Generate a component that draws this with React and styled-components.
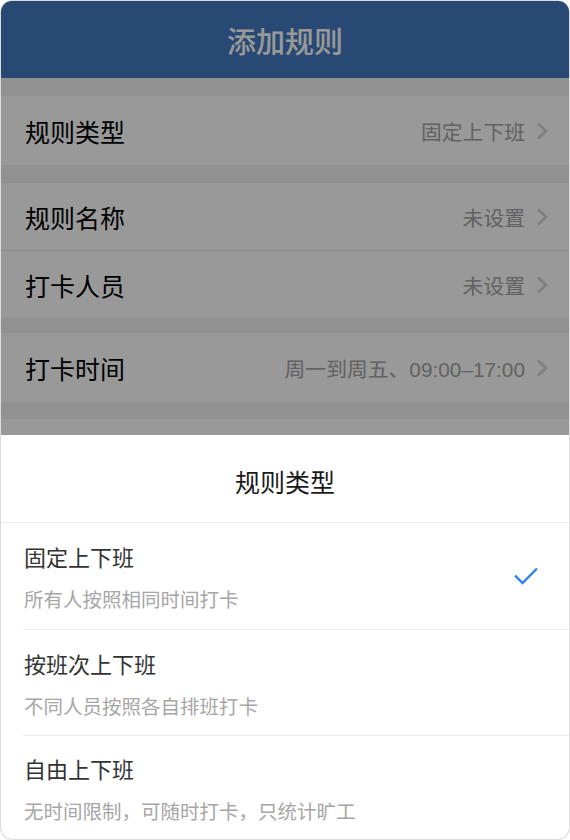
import React from 'react';
import styled, { createGlobalStyle } from 'styled-components';

const GlobalStyle = createGlobalStyle`
    html, body {
        margin: 0;
        padding: 0;
        background: #ffffff;
    }
    * {
        box-sizing: border-box;
    }
`;

const Phone = styled.div`
    position: relative;
    width: 570px;
    height: 840px;
    overflow: hidden;
    border: 1px solid #dcdcdc;
    border-radius: 12px;
    background-color: #f2f2f2;
    font-family: 'Noto Sans CJK SC', 'Noto Sans', sans-serif;
`;

const Header = styled.header`
    height: 77px;
    display: flex;
    align-items: center;
    justify-content: center;
    background-color: #437bc0;
    color: #fff;
    font-size: 29px;
    font-weight: 500;
`;

const Group = styled.div`
    margin-top: ${(p) => p.$gap}px;
    background-color: #fff;
`;

const Row = styled.div`
    height: ${(p) => p.$height}px;
    display: flex;
    align-items: center;
    padding: 0 20px 0 24px;
    border-top: ${(p) => (p.$divider ? '1px solid #e6e6e6' : 'none')};
`;

const Label = styled.span`
    flex: 1;
    font-size: 25px;
    color: #000;
`;

const Value = styled.span`
    font-family: 'Liberation Sans', 'Noto Sans CJK SC', sans-serif;
    font-size: 20.8px;
    color: #a3a3a3;
`;

const Chevron = styled.svg`
    width: 14px;
    height: 20px;
    margin-left: 10px;
    flex-shrink: 0;
`;

const Mask = styled.div`
    position: absolute;
    inset: 0;
    background-color: rgba(0, 0, 0, 0.4);
`;

const Sheet = styled.div`
    position: absolute;
    left: 0;
    right: 0;
    bottom: 0;
    height: 404px;
    background-color: #fff;
    display: flex;
    flex-direction: column;
`;

const SheetTitle = styled.div`
    height: 88px;
    display: flex;
    align-items: center;
    justify-content: center;
    padding-top: 4px;
    font-size: 25px;
    color: #1a1a1a;
    border-bottom: 1px solid #ebebeb;
`;

const Options = styled.div`
    padding-left: 22px;
`;

const Option = styled.div`
    height: ${(p) => p.$height}px;
    display: flex;
    align-items: center;
    padding-right: 30px;
    border-top: ${(p) => (p.$divider ? '1px solid #ebebeb' : 'none')};
`;

const OptionText = styled.div`
    flex: 1;
    display: flex;
    flex-direction: column;
    gap: 17px;
    padding-left: 1px;
    padding-top: 2px;
`;

const OptionTitle = styled.div`
    font-size: 22px;
    line-height: 26px;
    color: #333;
`;

const OptionDesc = styled.div`
    font-size: 19.5px;
    line-height: 25px;
    color: #a6a6a6;
`;

const Check = styled.svg`
    width: 26px;
    height: 20px;
`;

function Arrow() {
    return (
        <Chevron viewBox="0 0 14 20">
            <path
                d="M3 2.5 L11 10 L3 17.5"
                fill="none"
                stroke="#d4d4d4"
                strokeWidth="2.6"
            />
        </Chevron>
    );
}

const groups = [
    { gap: 18, rows: [{ label: '规则类型', value: '固定上下班', h: 69 }] },
    {
        gap: 18,
        rows: [
            { label: '规则名称', value: '未设置', h: 67 },
            { label: '打卡人员', value: '未设置', h: 68 },
        ],
    },
    { gap: 15, rows: [{ label: '打卡时间', value: '周一到周五、09:00–17:00', h: 69 }] },
    { gap: 17, rows: [{ label: '', value: '', h: 69 }] },
];

const options = [
    { title: '固定上下班', desc: '所有人按照相同时间打卡', checked: true, h: 106 },
    { title: '按班次上下班', desc: '不同人员按照各自排班打卡', h: 106 },
    { title: '自由上下班', desc: '无时间限制，可随时打卡，只统计旷工', h: 104 },
];

export default function App() {
    return (
        <>
            <GlobalStyle />
            <Phone>
                <Header>添加规则</Header>
                {groups.map((group, gi) => (
                    <Group key={gi} $gap={group.gap}>
                        {group.rows.map((row, ri) => (
                            <Row key={ri} $height={row.h} $divider={ri > 0}>
                                <Label>{row.label}</Label>
                                {row.value && <Value>{row.value}</Value>}
                                {row.value && <Arrow />}
                            </Row>
                        ))}
                    </Group>
                ))}
                <Mask />
                <Sheet>
                    <SheetTitle>规则类型</SheetTitle>
                    <Options>
                        {options.map((opt, i) => (
                            <Option key={opt.title} $height={opt.h} $divider={i > 0}>
                                <OptionText>
                                    <OptionTitle>{opt.title}</OptionTitle>
                                    <OptionDesc>{opt.desc}</OptionDesc>
                                </OptionText>
                                {opt.checked && (
                                    <Check viewBox="0 0 26 20">
                                        <path
                                            d="M2 9.5 L9.5 17 L24 2.5"
                                            fill="none"
                                            stroke="#2f80e6"
                                            strokeWidth="2.4"
                                        />
                                    </Check>
                                )}
                            </Option>
                        ))}
                    </Options>
                </Sheet>
            </Phone>
        </>
    );
}
